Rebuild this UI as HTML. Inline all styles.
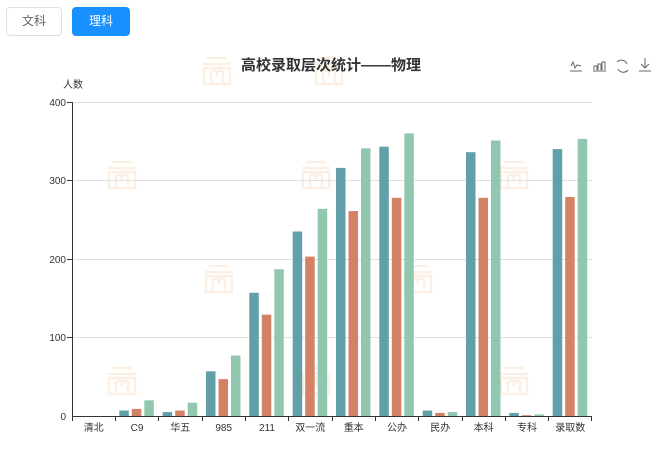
<!DOCTYPE html>
<html><head><meta charset="utf-8"><style>
body{margin:0;width:662px;height:461px;background:#fff;font-family:"Liberation Sans","Noto Sans CJK SC",sans-serif;overflow:hidden;position:relative}
.btn{position:absolute;top:7px;height:29px;width:56px;box-sizing:border-box;border-radius:4px;font-size:12px;line-height:27px;text-align:center}
.b1{left:6px;border:1px solid #dcdfe6;color:#606266;background:#fff}
.b2{left:72px;width:58px;border:1px solid #1890ff;background:#1890ff;color:#fff}
svg{position:absolute;left:0;top:0}
</style></head><body>
<div class="btn b1">文科</div><div class="btn b2">理科</div>
<svg width="662" height="461" font-family="Liberation Sans, Noto Sans CJK SC, sans-serif">
<defs><g id="wm" fill="none" stroke="#f8dcc0" stroke-width="2.5">
<line x1="4" y1="2" x2="24" y2="2"/><line x1="0" y1="8" x2="28" y2="8"/>
<rect x="1" y="12" width="26" height="16"/><path d="M8 26 V16 Q14 12 14 20 Q14 12 20 16 V26"/></g></defs>
<g opacity="0.45">
<use href="#wm" x="203" y="56"/><use href="#wm" x="315" y="56"/>
<use href="#wm" x="108" y="160"/><use href="#wm" x="302" y="160"/><use href="#wm" x="500" y="160"/>
<use href="#wm" x="205" y="264"/><use href="#wm" x="404" y="264"/>
<use href="#wm" x="108" y="366"/><use href="#wm" x="302" y="366"/><use href="#wm" x="500" y="366"/>
</g>
<text x="331" y="70" text-anchor="middle" font-size="15" font-weight="bold" fill="#333">高校录取层次统计——物理</text>
<g fill="none" stroke="#666" stroke-width="1">
<path d="M570 71h12M571 66l2-4 2 6 2-3 4 1"/>
<path d="M593 71h13M594 70v-4h3v4M598 70v-6h3v6M602 70v-8h3v8"/>
<path d="M617 62a6 6 0 0 1 10 2M628 70a6 6 0 0 1-10-1"/>
<path d="M639 71h12M645 58v10M641 64l4 4 4-4"/>
</g>
<text x="63" y="88" font-size="10" fill="#333">人数</text>
<g stroke="#e0e0e0"><line x1="72" y1="102.5" x2="592" y2="102.5"/><line x1="72" y1="180.5" x2="592" y2="180.5"/><line x1="72" y1="259.5" x2="592" y2="259.5"/><line x1="72" y1="337.5" x2="592" y2="337.5"/></g>
<g font-size="10" fill="#333" text-anchor="end"><text x="66" y="106">400</text><text x="66" y="184">300</text><text x="66" y="263">200</text><text x="66" y="341">100</text><text x="66" y="420">0</text></g>
<g fill="#61a0a8">
<rect x="119.3" y="410.5" width="9.5" height="5.5"/><rect x="162.7" y="412.1" width="9.5" height="3.9"/><rect x="206" y="371.3" width="9.5" height="44.7"/><rect x="249.3" y="292.8" width="9.5" height="123.2"/><rect x="292.7" y="231.5" width="9.5" height="184.5"/><rect x="336" y="167.9" width="9.5" height="248.1"/><rect x="379.3" y="146.7" width="9.5" height="269.3"/><rect x="422.7" y="410.5" width="9.5" height="5.5"/><rect x="466" y="152.2" width="9.5" height="263.8"/><rect x="509.3" y="412.9" width="9.5" height="3.1"/><rect x="552.7" y="149.1" width="9.5" height="266.9"/>
</g>
<g fill="#d48265">
<rect x="131.8" y="408.9" width="9.5" height="7.1"/><rect x="175.2" y="410.5" width="9.5" height="5.5"/><rect x="218.5" y="379.1" width="9.5" height="36.9"/><rect x="261.8" y="314.7" width="9.5" height="101.3"/><rect x="305.2" y="256.6" width="9.5" height="159.4"/><rect x="348.5" y="211.1" width="9.5" height="204.9"/><rect x="391.8" y="197.8" width="9.5" height="218.2"/><rect x="435.2" y="412.9" width="9.5" height="3.1"/><rect x="478.5" y="197.8" width="9.5" height="218.2"/><rect x="521.8" y="415.2" width="9.5" height="0.8"/><rect x="565.2" y="197" width="9.5" height="219"/>
</g>
<g fill="#91c7ae">
<rect x="144.3" y="400.3" width="9.5" height="15.7"/><rect x="187.7" y="402.7" width="9.5" height="13.3"/><rect x="231" y="355.6" width="9.5" height="60.4"/><rect x="274.3" y="269.2" width="9.5" height="146.8"/><rect x="317.7" y="208.8" width="9.5" height="207.2"/><rect x="361" y="148.3" width="9.5" height="267.7"/><rect x="404.3" y="133.4" width="9.5" height="282.6"/><rect x="447.7" y="412.1" width="9.5" height="3.9"/><rect x="491" y="140.5" width="9.5" height="275.5"/><rect x="534.3" y="414.4" width="9.5" height="1.6"/><rect x="577.7" y="138.9" width="9.5" height="277.1"/>
</g>
<g stroke="#333" stroke-width="1">
<line x1="72.5" y1="102" x2="72.5" y2="416"/><line x1="67" y1="102.5" x2="72" y2="102.5"/><line x1="67" y1="180.5" x2="72" y2="180.5"/><line x1="67" y1="259.5" x2="72" y2="259.5"/><line x1="67" y1="337.5" x2="72" y2="337.5"/>
<line x1="72" y1="416.5" x2="592" y2="416.5"/>
<path d="M72.5 416v5M115.5 416v5M158.5 416v5M202.5 416v5M245.5 416v5M288.5 416v5M332.5 416v5M375.5 416v5M418.5 416v5M462.5 416v5M505.5 416v5M548.5 416v5M591.5 416v5"/>
</g>
<g font-size="10" fill="#333" text-anchor="middle">
<text x="93.7" y="431">清北</text><text x="137" y="431">C9</text><text x="180.3" y="431">华五</text><text x="223.7" y="431">985</text><text x="267" y="431">211</text><text x="310.3" y="431">双一流</text><text x="353.7" y="431">重本</text><text x="397" y="431">公办</text><text x="440.3" y="431">民办</text><text x="483.7" y="431">本科</text><text x="527" y="431">专科</text><text x="570.3" y="431">录取数</text>
</g>
</svg>
</body></html>
